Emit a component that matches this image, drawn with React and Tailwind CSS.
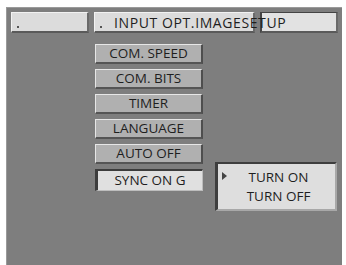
import React from 'react';

const items = ['COM. SPEED', 'COM. BITS', 'TIMER', 'LANGUAGE', 'AUTO OFF', 'SYNC ON G'];

export default function App() {
    return (
        <div className="w-[346px] h-[265px] bg-white overflow-hidden" style={{ fontFamily: '"Open Sans", "Liberation Sans", sans-serif' }}>
            <div className="ml-[6px] mt-[7px] w-[336px] h-[260px] bg-[#7e7e7e] border-t border-l border-[#9a9a9a] text-[#1e1e1e]">

                {/* tab row */}
                <div className="relative flex gap-[5px] pl-[4px] pt-[4px]">
                    <div className="relative w-[78px] h-[21px] bg-[#dcdcdc] border-t border-l border-[#f2f2f2] border-b-2 border-r-2 border-b-[#5a5a5a] border-r-[#6a6a6a]">
                        <span className="absolute left-[5px] bottom-[3px] w-[2px] h-[2px] bg-[#555]" />
                    </div>
                    <div className="relative w-[161px] h-[21px] bg-[#dcdcdc] border-t border-l border-[#f2f2f2] border-b-2 border-r-2 border-b-[#5a5a5a] border-r-[#6a6a6a]">
                        <span className="absolute left-[5px] bottom-[3px] w-[2px] h-[2px] bg-[#555]" />
                    </div>
                    <div className="w-[78px] h-[21px] bg-[#e2e2e2] border-t border-l-2 border-[#444] border-b-2 border-r-2 border-b-[#5a5a5a] border-r-[#6a6a6a]" />
                    <span className="absolute left-[107px] top-[5px] text-[14px] leading-[19px] tracking-[0.6px] whitespace-nowrap">
                        INPUT OPT.IMAGESETUP
                    </span>
                </div>

                <div className="flex gap-[12px] pl-[88px] pt-[11px]">
                    {/* menu column */}
                    <div className="flex flex-col gap-[5px] w-[108px]">
                        {items.map((t) => (
                            t === 'SYNC ON G' ? (
                                <div key={t} className="h-[22px] flex items-center justify-center bg-[#e0e0e0] border-l-[3px] border-t-2 border-[#3c3c3c] border-r border-b border-r-[#bdbdbd] border-b-[#bdbdbd] text-[13.5px] leading-none">
                                    {t}
                                </div>
                            ) : (
                                <div key={t} className="h-[20px] flex items-center justify-center bg-[#b0b0b0] border-t border-l border-[#e6e6e6] border-r-2 border-b-2 border-r-[#4e4e4e] border-b-[#555] text-[13.5px] leading-none">
                                    {t}
                                </div>
                            )
                        ))}
                    </div>

                    {/* sub menu */}
                    <div className="relative mt-[118px] w-[122px] h-[49px] bg-[#dedede] border-l-[3px] border-t-2 border-[#3e3e3e] border-r-2 border-b-2 border-r-[#a8a8a8] border-b-[#a8a8a8] flex flex-col items-center justify-center text-[13.5px] leading-[19px] pl-[4px]">
                        <span className="absolute left-[4px] top-[8px] w-0 h-0 border-y-[4px] border-y-transparent border-l-[5px] border-l-[#444]" />
                        <span>TURN ON</span>
                        <span>TURN OFF</span>
                    </div>
                </div>
            </div>
        </div>
    );
}
